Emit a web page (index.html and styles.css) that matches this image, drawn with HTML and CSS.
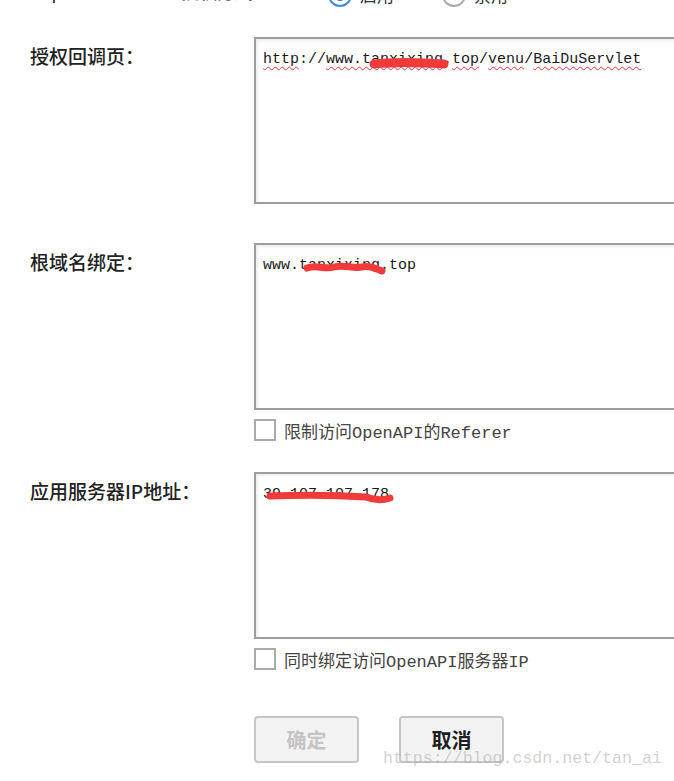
FILE: index.html
```html
<!DOCTYPE html>
<html lang="zh-CN">
<head>
    <meta charset="UTF-8">
    <meta name="viewport" content="width=device-width, initial-scale=1.0">
    <title>授权设置</title>
    <link rel="stylesheet" href="styles.css">
</head>
<body>
    <div class="page">
        <div class="form">
            <div class="row row-top">
                <div class="label label-mixed">Implicit Grant授权方式</div>
                <div class="radios">
                    <label class="radio"><span class="radio-dot on"></span>启用</label>
                    <label class="radio"><span class="radio-dot"></span>禁用</label>
                </div>
            </div>

            <div class="row row-first">
                <div class="label">授权回调页：</div>
                <div class="field">
                    <div class="textbox"><span class="typo">http</span>://<span class="typo">www.tanxixing</span>.<span class="typo">top</span>/<span class="typo">venu</span>/<span class="typo">BaiDuServlet</span>
                        <svg class="scribble" width="300" height="40" viewBox="0 0 300 40">
                            <path d="M118 25 C135 23, 160 23, 188 25" />
                        </svg>
                    </div>
                </div>
            </div>

            <div class="row">
                <div class="label">根域名绑定：</div>
                <div class="field">
                    <div class="textbox">www.tanxixing.top
                        <svg class="scribble thin" width="300" height="40" viewBox="0 0 300 40">
                            <path d="M51 23 C60 19, 68 25, 78 22 S 96 24, 106 22 S 122 25, 126 26" />
                        </svg>
                    </div>
                    <label class="check"><span class="box"></span>限制访问OpenAPI的Referer</label>
                </div>
            </div>

            <div class="row">
                <div class="label">应用服务器IP地址：</div>
                <div class="field">
                    <div class="textbox">39.107.107.178
                        <svg class="scribble thin" width="300" height="40" viewBox="0 0 300 40">
                            <path d="M14 22 C40 21, 80 21, 110 23 C120 27, 128 26, 134 24" />
                        </svg>
                    </div>
                    <label class="check"><span class="box"></span>同时绑定访问OpenAPI服务器IP</label>
                </div>
            </div>

            <div class="actions">
                <button class="btn" disabled>确定</button>
                <button class="btn">取消</button>
            </div>
        </div>

        <div class="watermark">https://blog.csdn.net/tan_ai</div>
    </div>
</body>
</html>
```

FILE: styles.css
```css
html, body {
    margin: 0;
    background: #fff;
}
body {
    font-family: "Liberation Mono", "Noto Sans CJK SC", monospace;
    color: #222;
    overflow: hidden;
}
.page {
    position: relative;
    width: 674px;
    height: 781px;
    overflow: hidden;
}
.form {
    display: flex;
    flex-direction: column;
    gap: 31px;
    margin-top: -18px;
    padding-left: 30px;
}
.row {
    display: grid;
    grid-template-columns: 224px 460px;
}
.row-first {
    margin-bottom: 8px;
}
.label {
    font-family: "Noto Sans CJK SC", sans-serif;
    font-size: 19px;
    font-weight: 500;
    line-height: 22px;
    padding-top: 8px;
    color: #222;
}
.row-top {
    height: 24px;
}
.row-top .label {
    padding-top: 0;
    line-height: 24px;
}
.label-mixed {
    font-family: "Liberation Mono", "Noto Sans CJK SC", monospace;
    font-size: 18px;
}
.radios {
    display: flex;
    gap: 48px;
    padding-left: 74px;
    align-items: center;
}
.radio {
    display: flex;
    align-items: center;
    gap: 8px;
    font-family: "Noto Sans CJK SC", sans-serif;
    font-size: 17px;
    color: #333;
}
.radio-dot {
    width: 20px;
    height: 20px;
    border: 2px solid #aaa;
    border-radius: 50%;
    background: #fff;
    position: relative;
}
.radio-dot.on {
    border-color: #3c8be0;
}
.radio-dot.on::after {
    content: "";
    position: absolute;
    left: 4px;
    top: 4px;
    width: 12px;
    height: 12px;
    border-radius: 50%;
    background: #2d7fd8;
}
.textbox {
    position: relative;
    box-sizing: border-box;
    height: 167px;
    border: 2px solid #9e9e9e;
    box-shadow: inset 2px 2px 3px rgba(0, 0, 0, 0.07);
    padding: 12px 7px;
    font-family: "Liberation Mono", monospace;
    font-size: 15px;
    line-height: 18px;
    color: #1a1a1a;
    background: #fff;
}
.typo {
    text-decoration: underline wavy #e43b3b;
    text-decoration-thickness: 1px;
    text-underline-offset: 3px;
}
.scribble {
    position: absolute;
    left: 0;
    top: 0;
    fill: none;
    stroke: #f23a3a;
    stroke-width: 9;
    stroke-linecap: round;
}
.scribble.thin {
    stroke-width: 7;
}
.check {
    display: flex;
    align-items: center;
    gap: 8px;
    margin-top: 9px;
    height: 22px;
    font-family: "Liberation Mono", "Noto Sans CJK SC", monospace;
    font-size: 17px;
    color: #444;
}
.box {
    box-sizing: border-box;
    width: 22px;
    height: 22px;
    border: 2px solid #ababab;
    background: #fff;
}
.actions {
    display: flex;
    gap: 40px;
    padding-left: 224px;
    margin-top: 15px;
}
.btn {
    box-sizing: border-box;
    width: 105px;
    height: 47px;
    border: 2px solid #c6c6c6;
    border-radius: 4px;
    background: #f3f3f3;
    font-family: "Noto Sans CJK SC", sans-serif;
    font-size: 20px;
    font-weight: 700;
    color: #1e1e1e;
}
.btn:disabled {
    color: #c4c4c4;
}
.watermark {
    position: absolute;
    left: 383px;
    top: 749px;
    font-family: "Liberation Mono", monospace;
    font-size: 16.6px;
    color: rgba(170, 170, 170, 0.55);
}
```
